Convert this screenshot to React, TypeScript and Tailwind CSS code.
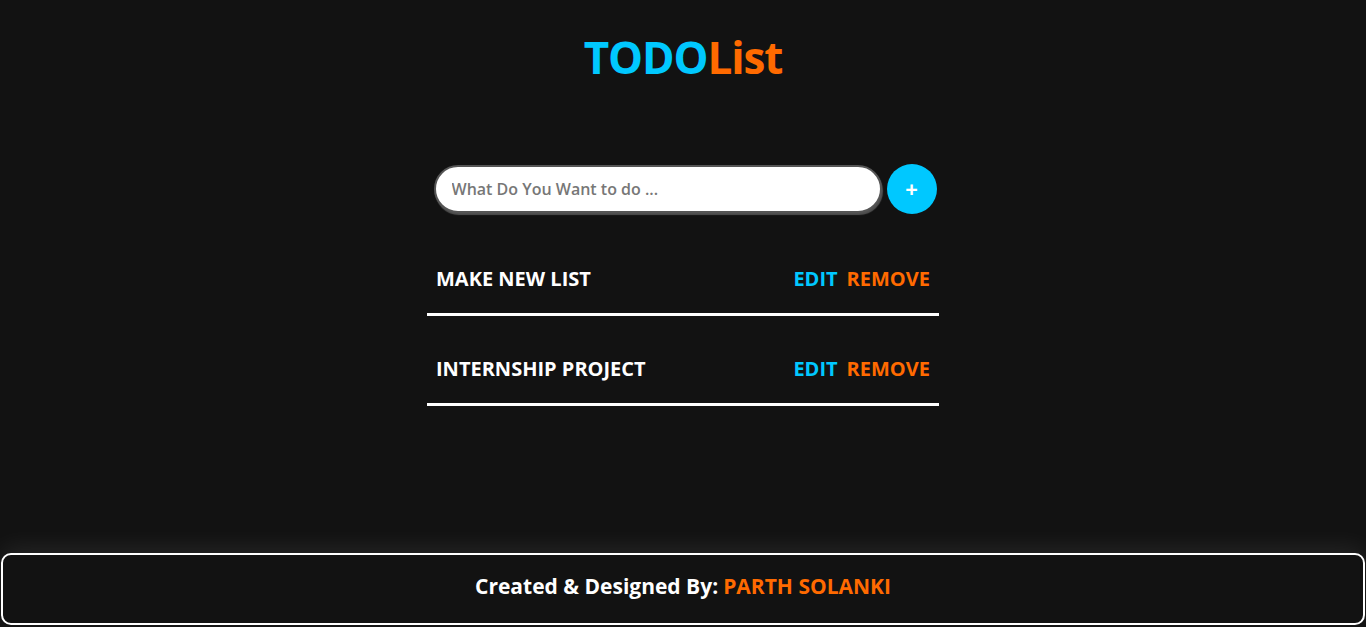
const todos = ["MAKE NEW LIST", "INTERNSHIP PROJECT"];

export default function App() {
  return (
    <div
      className="h-[627px] bg-[#121212] flex flex-col overflow-hidden"
      style={{ fontFamily: '"Open Sans", "Noto Sans", sans-serif' }}
    >
      {/* Title */}
      <h1 className="text-center text-[44px] font-bold leading-none pt-[35px] tracking-tight">
        <span className="text-[#00c8ff]">TODO</span>
        <span className="text-[#ff6a00]">List</span>
      </h1>

      {/* Input */}
      <div className="flex justify-center items-center gap-[5px] mt-[85px] ml-[4px]">
        <input
          placeholder="What Do You Want to do ..."
          className="w-[448px] h-[48px] rounded-full bg-white border-2 border-[#555] shadow-[1px_2px_1px_rgba(120,120,120,0.6)] px-[16px] text-[16px] font-semibold text-[#333] placeholder:text-[#777] outline-none"
        />
        <button className="w-[50px] h-[50px] rounded-full bg-[#00c8ff] text-white text-[22px] font-bold flex items-center justify-center leading-none pb-[2px]">
          +
        </button>
      </div>

      {/* List */}
      <ul className="w-[512px] mx-auto mt-[12px]">
        {todos.map((todo) => (
          <li
            key={todo}
            className="flex items-center justify-between h-[90px] pt-[18px] px-[9px] border-b-[3px] border-white text-[20px] font-bold"
          >
            <span className="text-white">{todo}</span>
            <span className="flex gap-[9px]">
              <span className="text-[#00c8ff]">EDIT</span>
              <span className="text-[#ff6a00]">REMOVE</span>
            </span>
          </li>
        ))}
      </ul>

      {/* Footer */}
      <footer className="mt-auto mb-[2px] mx-[1px] h-[72px] pb-[5px] rounded-[10px] border-2 border-white bg-[#121212] shadow-[0_-6px_24px_rgba(255,255,255,0.08)] flex items-center justify-center text-[21px] font-bold">
        <span className="text-white">Created &amp; Designed By:</span>
        <span className="text-[#ff6a00] ml-[5px]">PARTH SOLANKI</span>
      </footer>
    </div>
  );
}
